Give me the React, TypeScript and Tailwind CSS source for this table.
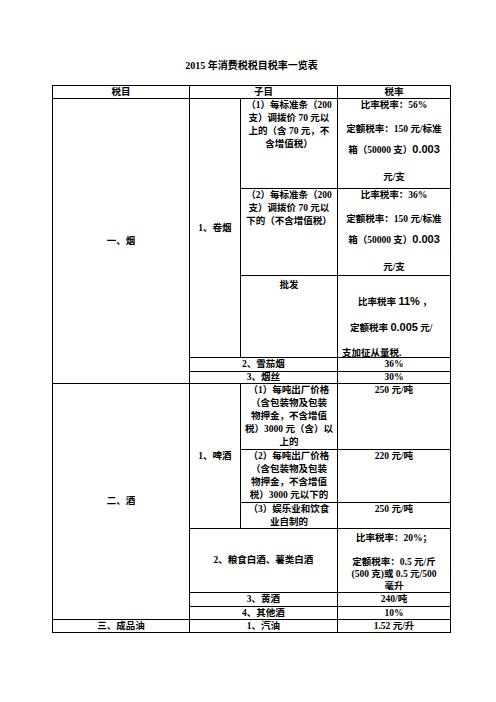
export default function App() {
  const c = "bg-white overflow-hidden";
  const mid = "bg-white flex items-center justify-center overflow-hidden";
  return (
    <div className="min-h-[702px] bg-white pt-[59px] pl-[52px] text-black font-bold font-['Liberation_Serif','Noto_Sans_CJK_SC',serif] text-[9.5px]">
      <div className="w-[399px] h-[13px] text-center text-[10px] leading-[13px]">
        2015 年消费税税目税率一览表
      </div>
      <div className="mt-[13px] grid w-[399px] grid-cols-[136px_50px_96px_112px] grid-rows-[12px_89px_86px_81px_13px_11px_65px_52px_25px_63px_13px_12px_12px] gap-px bg-black p-px leading-[13px]">
        {/* header */}
        <div className={`${mid} col-start-1 row-start-1`}>税目</div>
        <div className={`${mid} col-start-2 col-span-2 row-start-1`}>子目</div>
        <div className={`${mid} col-start-4 row-start-1`}>税率</div>

        {/* 烟 */}
        <div className={`${mid} col-start-1 row-start-2 row-span-5`}>一、烟</div>
        <div className={`${mid} col-start-2 row-start-2 row-span-3`}>1、卷烟</div>
        <div className={`${c} col-start-3 row-start-2 text-center`}>
          （1）每标准条（200
          <br />
          支）调拨价 70 元以
          <br />
          上的（含 70 元，不
          <br />
          含增值税）
        </div>
        <div className={`${c} col-start-4 row-start-2 text-center`}>
          <div>比率税率：56%</div>
          <div className="mt-[11px]">定额税率：150 元/标准</div>
          <div className="mt-[7px]">
            箱（50000 支）<span className="font-['Liberation_Sans',sans-serif] text-[11px]">0.003</span>
          </div>
          <div className="mt-[14px]">元/支</div>
        </div>
        <div className={`${c} col-start-3 row-start-3 text-center`}>
          （2）每标准条（200
          <br />
          支）调拨价 70 元以
          <br />
          下的（不含增值税）
        </div>
        <div className={`${c} col-start-4 row-start-3 text-center`}>
          <div>比率税率：36%</div>
          <div className="mt-[11px]">定额税率：150 元/标准</div>
          <div className="mt-[7px]">
            箱（50000 支）<span className="font-['Liberation_Sans',sans-serif] text-[11px]">0.003</span>
          </div>
          <div className="mt-[14px]">元/支</div>
        </div>
        <div className={`${c} col-start-3 row-start-4 text-center pt-[3px]`}>批发</div>
        <div className={`${c} col-start-4 row-start-4 pt-[20px] leading-[11px]`}>
          <div className="pl-[20px]">
            比率税率 <span className="font-['Liberation_Sans',sans-serif] text-[11px]">11%</span> ，
          </div>
          <div className="mt-[14px] pl-[12px]">
            定额税率 <span className="font-['Liberation_Sans',sans-serif] text-[11px]">0.005</span> 元/
          </div>
          <div className="mt-[14px] pl-[4px]">支加征从量税.</div>
        </div>
        <div className={`${mid} col-start-2 col-span-2 row-start-5`}>2、雪茄烟</div>
        <div className={`${mid} col-start-4 row-start-5`}>36%</div>
        <div className={`${mid} col-start-2 col-span-2 row-start-6`}>3、烟丝</div>
        <div className={`${mid} col-start-4 row-start-6`}>30%</div>

        {/* 酒 */}
        <div className={`${mid} col-start-1 row-start-7 row-span-6`}>二、酒</div>
        <div className={`${mid} col-start-2 row-start-7 row-span-3`}>1、啤酒</div>
        <div className={`${c} col-start-3 row-start-7 text-center`}>
          （1）每吨出厂价格
          <br />
          （含包装物及包装
          <br />
          物押金，不含增值
          <br />
          税）3000 元（含）以
          <br />
          上的
        </div>
        <div className={`${c} col-start-4 row-start-7 text-center`}>250 元/吨</div>
        <div className={`${c} col-start-3 row-start-8 text-center`}>
          （2）每吨出厂价格
          <br />
          （含包装物及包装
          <br />
          物押金，不含增值
          <br />
          税）3000 元以下的
        </div>
        <div className={`${c} col-start-4 row-start-8 text-center`}>220 元/吨</div>
        <div className={`${c} col-start-3 row-start-9 text-center`}>
          （3）娱乐业和饮食
          <br />
          业自制的
        </div>
        <div className={`${c} col-start-4 row-start-9 text-center`}>250 元/吨</div>
        <div className={`${mid} col-start-2 col-span-2 row-start-10`}>2、粮食白酒、薯类白酒</div>
        <div className={`${c} col-start-4 row-start-10 text-center pt-[3px] leading-[12px]`}>
          <div>比率税率：20%；</div>
          <div className="h-[12px]" />
          <div>定额税率：0.5 元/斤</div>
          <div>(500 克)或 0.5 元/500</div>
          <div>毫升</div>
        </div>
        <div className={`${mid} col-start-2 col-span-2 row-start-11`}>3、黄酒</div>
        <div className={`${mid} col-start-4 row-start-11`}>240/吨</div>
        <div className={`${mid} col-start-2 col-span-2 row-start-12`}>4、其他酒</div>
        <div className={`${mid} col-start-4 row-start-12`}>10%</div>

        {/* 成品油 */}
        <div className={`${mid} col-start-1 row-start-13`}>三、成品油</div>
        <div className={`${mid} col-start-2 col-span-2 row-start-13`}>1、汽油</div>
        <div className={`${mid} col-start-4 row-start-13`}>1.52 元/升</div>
      </div>
    </div>
  );
}
